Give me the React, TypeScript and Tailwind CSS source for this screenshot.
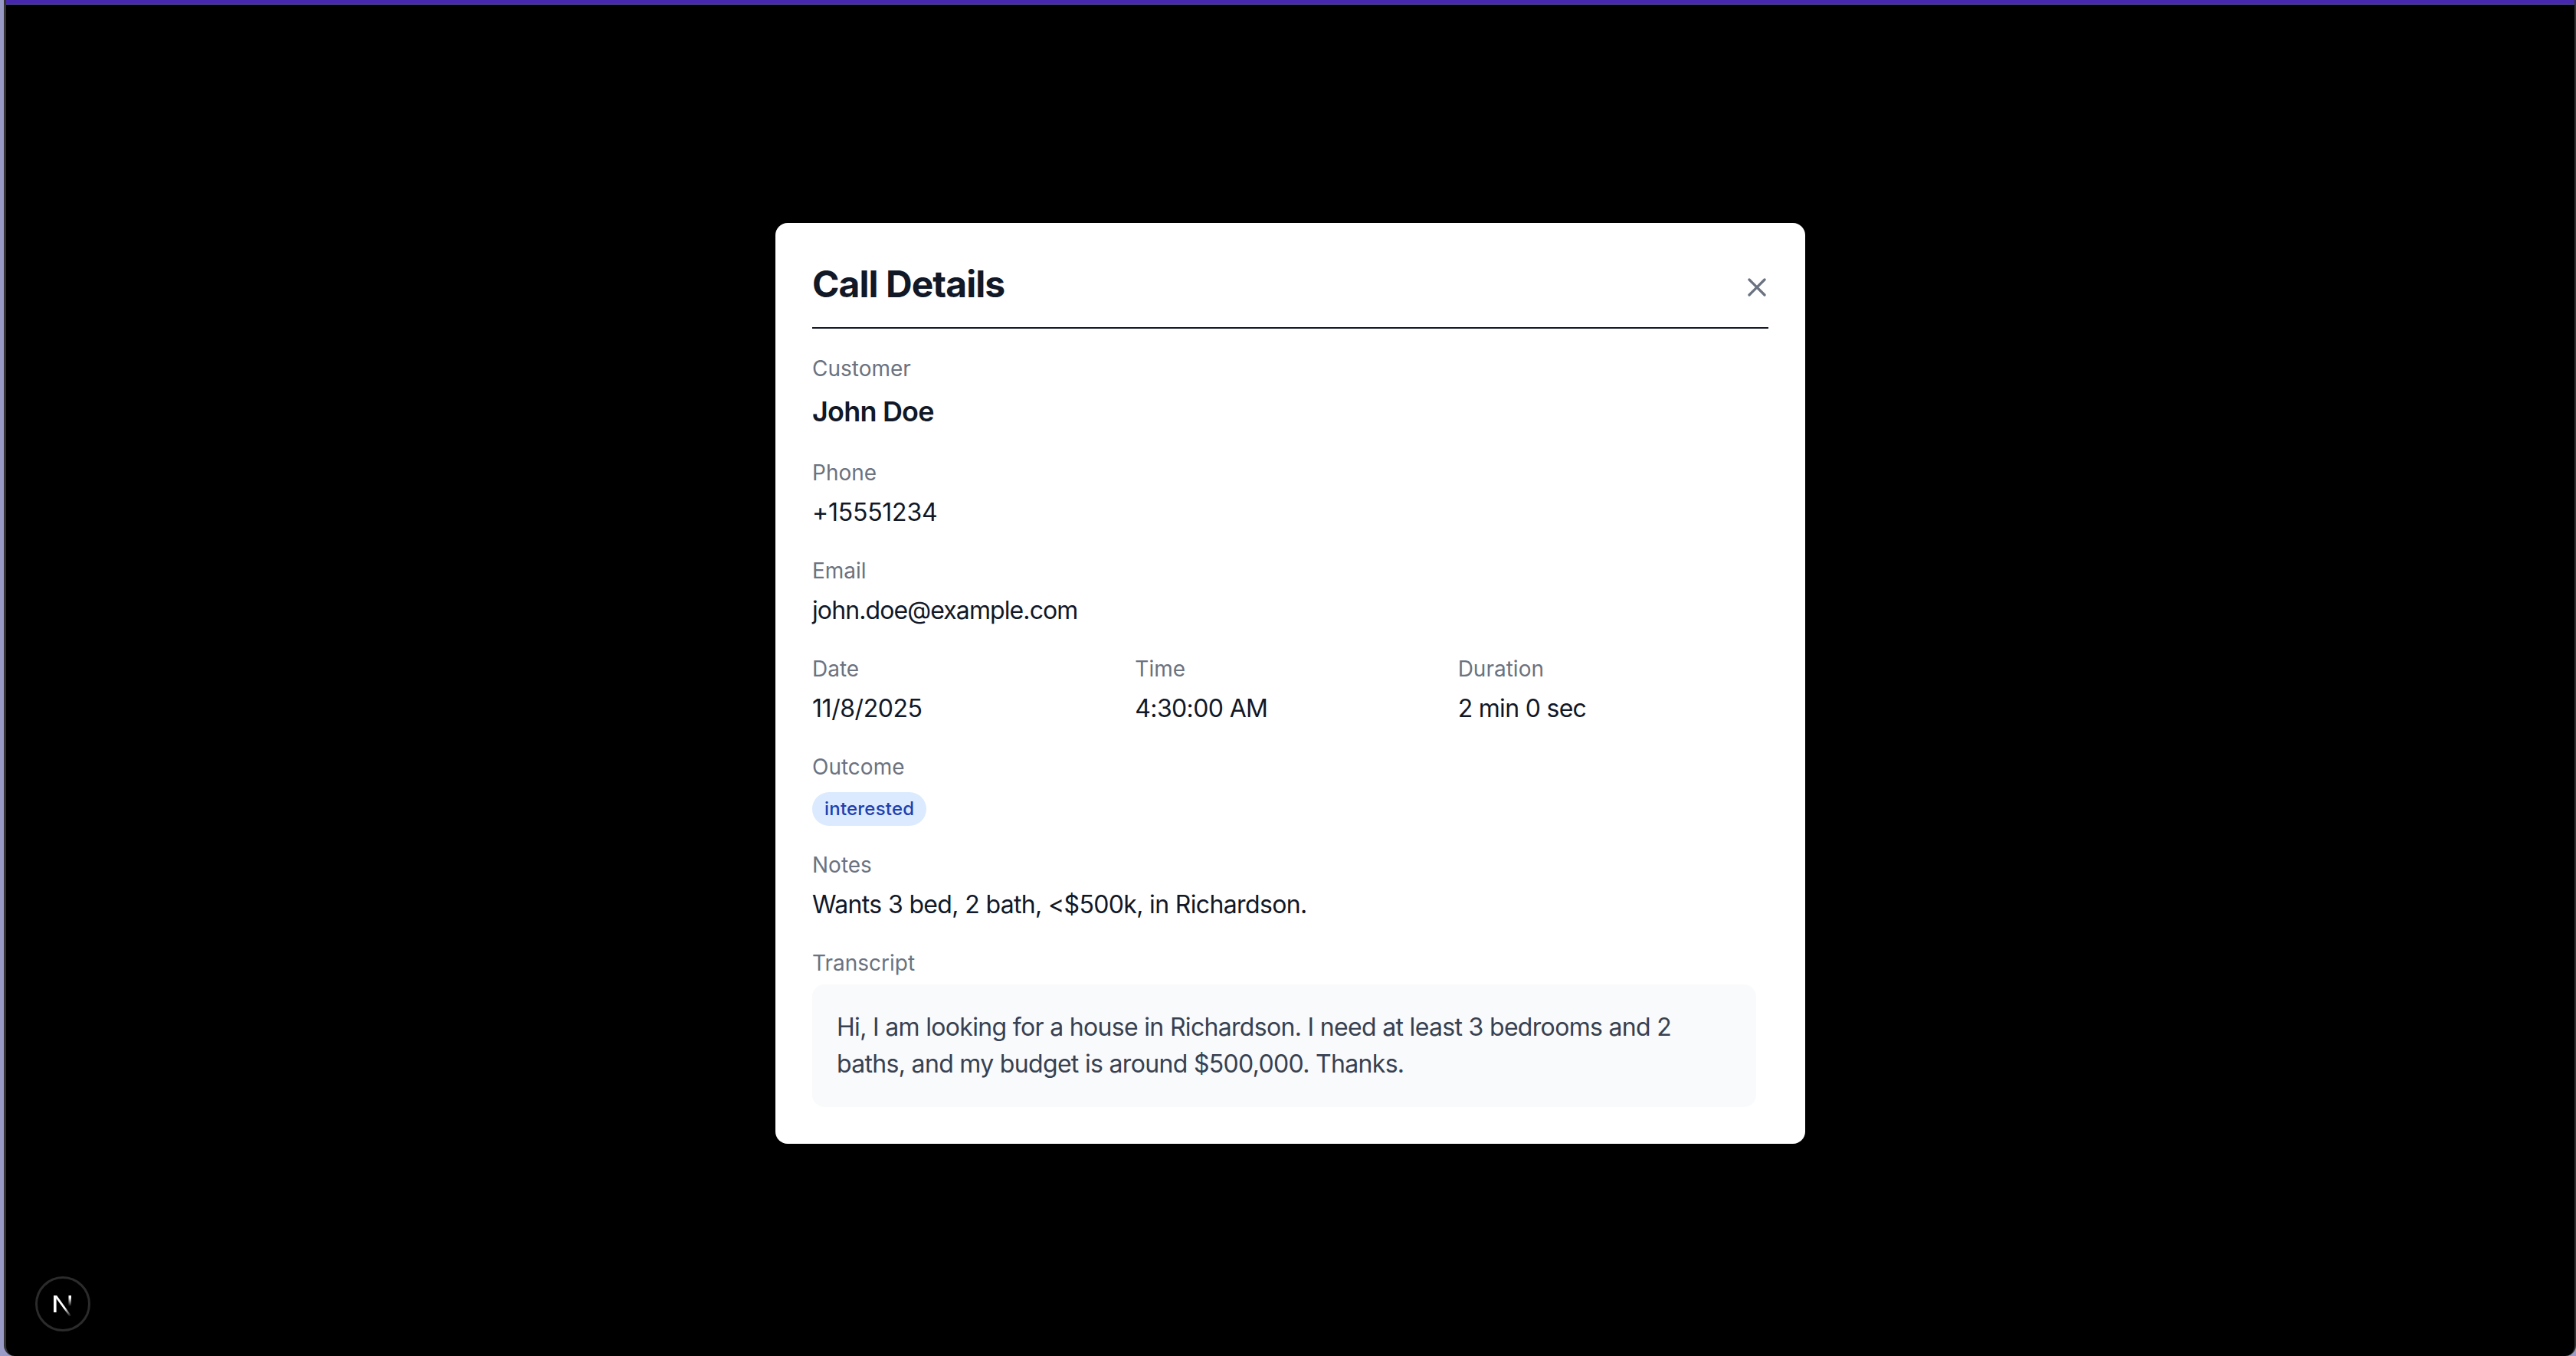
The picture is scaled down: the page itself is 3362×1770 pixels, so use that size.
import React from "react";
import { X } from "lucide-react";

const Label = ({ children }: { children: React.ReactNode }) => (
  <p className="text-[28px] leading-[40px] text-[#6b7280]">{children}</p>
);

const Field = ({ label, value, tracking }: { label: string; value: string; tracking: string }) => (
  <div>
    <Label>{label}</Label>
    <p className={`mt-[8px] text-[32px] leading-[48px] text-[#111827] ${tracking}`}>{value}</p>
  </div>
);

export default function App() {
  return (
    <div className="relative h-[1770px] w-[3362px] overflow-hidden bg-[#9a9ac6] pl-[5px] font-['Inter',sans-serif] antialiased">
      <div className="flex h-full flex-col overflow-hidden rounded-b-[14px] border-x-[3px] border-r-2 border-x-[#333333] bg-black">
        <div className="h-[6px] shrink-0 border-b border-[#6a58bc] bg-[#4528ae]" />
        <div className="flex flex-1 items-start justify-center pt-[285px]">
          <div className="w-[1344px] rounded-[16px] bg-white p-[48px]">
            <div className="flex items-center justify-between border-b-2 border-[#111827] pb-[24px]">
              <h2 className="text-[48px] font-bold leading-[64px] tracking-[-0.95px] text-[#111827]">Call Details</h2>
              <button type="button" className="-mr-[5px] mt-[8px] text-[#6b7280]">
                <X size={40} strokeWidth={2} />
              </button>
            </div>
            <div className="mt-[32px] flex flex-col gap-[32px] pr-[16px]">
              <div>
                <Label>Customer</Label>
                <p className="mt-[8px] text-[36px] font-semibold leading-[56px] tracking-[-0.8px] text-[#111827]">John Doe</p>
              </div>
              <Field label="Phone" value="+15551234" tracking="tracking-[-0.24px]" />
              <Field label="Email" value="john.doe@example.com" tracking="tracking-[-0.9px]" />
              <div className="grid grid-cols-3 gap-[32px]">
                <Field label="Date" value="11/8/2025" tracking="tracking-[-0.45px]" />
                <Field label="Time" value="4:30:00 AM" tracking="tracking-[-0.64px]" />
                <Field label="Duration" value="2 min 0 sec" tracking="tracking-[-0.7px]" />
              </div>
              <div>
                <Label>Outcome</Label>
                <div className="h-[56px] pt-[13px]">
                  <span className="inline-block rounded-full bg-[#dbeafe] px-[16px] py-[6px] align-top text-[24px] font-medium leading-[32px] tracking-[0.2px] text-[#1e40af]">
                    interested
                  </span>
                </div>
              </div>
              <Field label="Notes" value="Wants 3 bed, 2 bath, <$500k, in Richardson." tracking="tracking-[-0.65px]" />
              <div>
                <Label>Transcript</Label>
                <p className="mt-[8px] rounded-[16px] bg-[#f9fafb] p-[32px] text-[32px] leading-[48px] tracking-[-0.68px] text-[#374151]">
                  Hi, I am looking for a house in Richardson. I need at least 3 bedrooms and 2 baths, and my budget is around $500,000. Thanks.
                </p>
              </div>
            </div>
          </div>
        </div>
      </div>
      {/* dev indicator */}
      <div className="absolute bottom-[32px] left-[46px] flex h-[72px] w-[72px] items-center justify-center rounded-full border-[3px] border-[#2b2b2b] bg-black">
        <svg width="32" height="32" viewBox="0 0 32 32" fill="none">
          <defs>
            <linearGradient id="nDiag" x1="6" y1="5" x2="27" y2="32" gradientUnits="userSpaceOnUse">
              <stop offset="0.6" stopColor="#fff" />
              <stop offset="1" stopColor="#fff" stopOpacity="0" />
            </linearGradient>
            <linearGradient id="nBar" x1="25" y1="5" x2="25" y2="19" gradientUnits="userSpaceOnUse">
              <stop offset="0.2" stopColor="#fff" />
              <stop offset="1" stopColor="#fff" stopOpacity="0" />
            </linearGradient>
          </defs>
          <path d="M4 5h3.6v22H4z" fill="#fff" />
          <path d="M4.5 5h3.6L27.5 32h-3.2z" fill="url(#nDiag)" />
          <path d="M23.5 5H27v14h-3.5z" fill="url(#nBar)" />
        </svg>
      </div>
    </div>
  );
}
